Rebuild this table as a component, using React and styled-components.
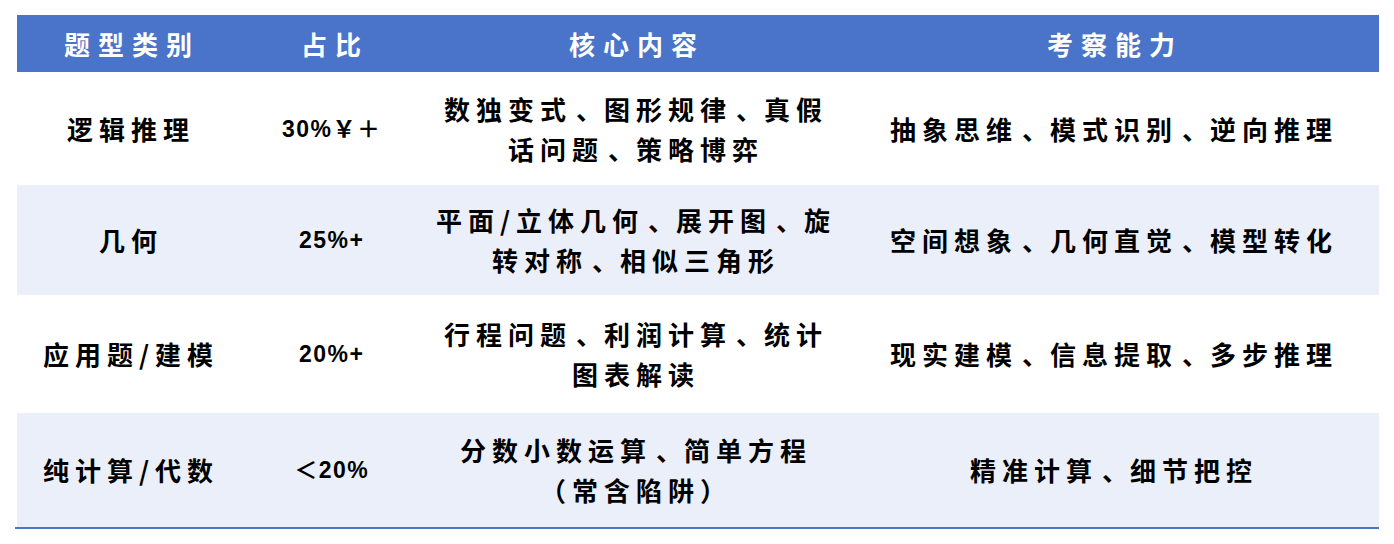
import React from 'react';
import styled, { createGlobalStyle } from 'styled-components';

const GlobalStyle = createGlobalStyle`
  body {
    margin: 0;
    background: #ffffff;
    font-family: "Noto Sans CJK SC", "Noto Sans", sans-serif;
  }
`;

const COLS = '222px 184px 420px 536px';

const Page = styled.div`
  padding: 15px 15px 0 15px;
`;

const Table = styled.div`
  width: 1364px;
  border-bottom: 2px solid #4a74c9;
`;

const Row = styled.div`
  display: grid;
  grid-template-columns: ${COLS};
  margin-left: 2px;
  height: ${(p) => p.$h}px;
  background: ${(p) => (p.$head ? '#4a74c9' : p.$alt ? '#ebeff9' : '#ffffff')};
`;

const Cell = styled.div`
  display: flex;
  align-items: center;
  justify-content: center;
  text-align: center;
  white-space: nowrap;
  color: #000;
  font-size: 26px;
  line-height: 40px;
  font-weight: 600;
  letter-spacing: 6px;
  padding-left: 6px;
`;

const HeadCell = styled(Cell)`
  color: #ffffff;
  font-weight: 700;
  letter-spacing: 8px;
  padding-left: 8px;
`;

const ShareCell = styled(Cell)`
  font-family: "Liberation Sans", "Noto Sans CJK SC", sans-serif;
  font-size: 23px;
  font-weight: 600;
  letter-spacing: 1.5px;
  padding-left: 1.5px;
`;

/* the list comma sits a little right of where Noto puts it */
const Punct = styled.span`
  padding-left: 4px;
  letter-spacing: 2px;
`;

const headers = ['题型类别', '占比', '核心内容', '考察能力'];

const rows = [
  {
    h: 113,
    type: '逻辑推理',
    share: '30%￥＋',
    content: ['数独变式、图形规律、真假', '话问题、策略博弈'],
    skill: ['抽象思维、模式识别、逆向推理'],
  },
  {
    h: 110,
    type: '几何',
    share: '25%+',
    content: ['平面/立体几何、展开图、旋', '转对称、相似三角形'],
    skill: ['空间想象、几何直觉、模型转化'],
  },
  {
    h: 118,
    type: '应用题/建模',
    share: '20%+',
    content: ['行程问题、利润计算、统计', '图表解读'],
    skill: ['现实建模、信息提取、多步推理'],
  },
  {
    h: 114,
    type: '纯计算/代数',
    share: '＜20%',
    content: ['分数小数运算、简单方程', '（常含陷阱）'],
    skill: ['精准计算、细节把控'],
  },
];

const Line = ({ text }) =>
  text.split('、').map((part, i) => (
    <React.Fragment key={i}>
      {i > 0 && <Punct>、</Punct>}
      {part}
    </React.Fragment>
  ));

const Lines = ({ lines }) => (
  <div>
    {lines.map((l, i) => (
      <React.Fragment key={i}>
        {i > 0 && <br />}
        <Line text={l} />
      </React.Fragment>
    ))}
  </div>
);

export default function App() {
  return (
    <>
      <GlobalStyle />
      <Page>
        <Table>
          <Row $head $h={57}>
            {headers.map((h) => (
              <HeadCell key={h}>{h}</HeadCell>
            ))}
          </Row>
          {rows.map((r, i) => (
            <Row key={r.type} $h={r.h} $alt={i % 2 === 1}>
              <Cell>{r.type}</Cell>
              <ShareCell>{r.share}</ShareCell>
              <Cell>
                <Lines lines={r.content} />
              </Cell>
              <Cell>
                <Lines lines={r.skill} />
              </Cell>
            </Row>
          ))}
        </Table>
      </Page>
    </>
  );
}
